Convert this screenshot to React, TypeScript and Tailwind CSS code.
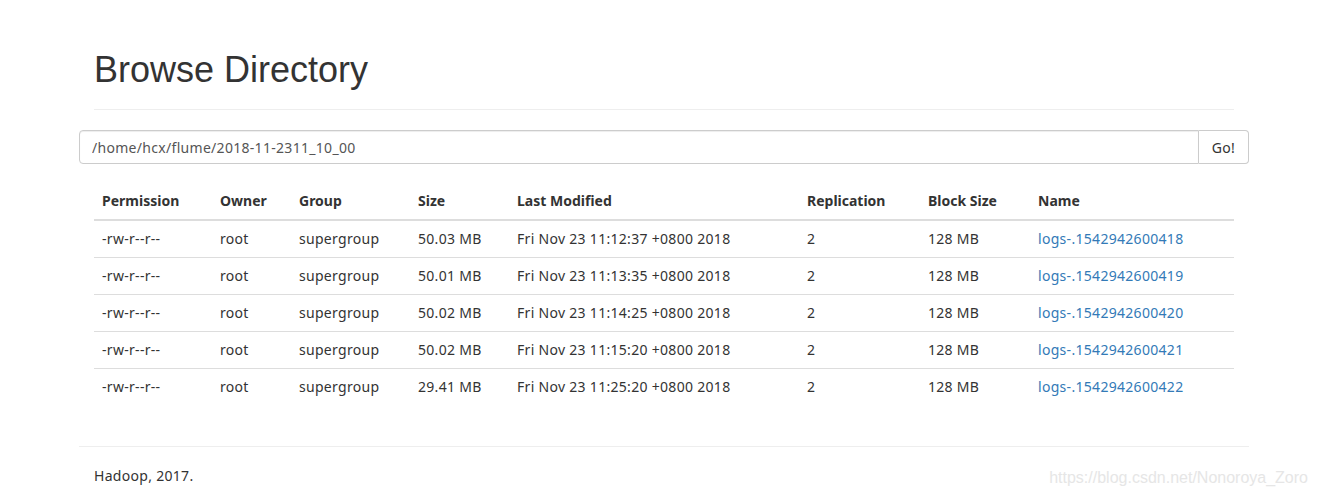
const rows = [
  { size: "50.03 MB", time: "Fri Nov 23 11:12:37 +0800 2018", name: "logs-.1542942600418" },
  { size: "50.01 MB", time: "Fri Nov 23 11:13:35 +0800 2018", name: "logs-.1542942600419" },
  { size: "50.02 MB", time: "Fri Nov 23 11:14:25 +0800 2018", name: "logs-.1542942600420" },
  { size: "50.02 MB", time: "Fri Nov 23 11:15:20 +0800 2018", name: "logs-.1542942600421" },
  { size: "29.41 MB", time: "Fri Nov 23 11:25:20 +0800 2018", name: "logs-.1542942600422" },
];

const cols = [
  { label: "Permission", w: "w-[118px]" },
  { label: "Owner", w: "w-[79px]" },
  { label: "Group", w: "w-[119px]" },
  { label: "Size", w: "w-[99px]" },
  { label: "Last Modified", w: "w-[290px]" },
  { label: "Replication", w: "w-[121px]" },
  { label: "Block Size", w: "w-[110px]" },
  { label: "Name", w: "w-[204px]" },
];

const td = "border-t border-[#ddd] px-2 py-2 leading-5 tracking-[0.3px]";

export default function App() {
  return (
    <div className="relative h-[498px] overflow-hidden bg-white text-[#333] font-['Noto_Sans',sans-serif] text-[14px]">
      <div className="ml-[79px] w-[1170px] px-[15px]">
        <div className="pt-[50px] pb-[19px] border-b border-[#eee]">
          <h1 className="font-['Liberation_Sans',Arial,sans-serif] text-[36px] leading-[40px] text-[#333]">
            Browse Directory
          </h1>
        </div>

        <div className="-mx-[15px] mt-[20px] flex h-[34px]">
          <input
            readOnly
            value="/home/hcx/flume/2018-11-2311_10_00"
            className="flex-1 rounded-l-[4px] border border-[#ccc] px-[12px] text-[14px] tracking-[0.3px] text-[#555] shadow-[inset_0_1px_1px_rgba(0,0,0,0.075)] outline-none"
          />
          <button className="w-[50px] rounded-r-[4px] border border-l-0 border-[#ccc] bg-white text-[14px] tracking-[0.3px] text-[#333]">
            Go!
          </button>
        </div>

        <table className="mt-[19px] w-[1140px] table-fixed border-collapse">
          <thead>
            <tr>
              {cols.map((c) => (
                <th
                  key={c.label}
                  className={`${c.w} border-b-2 border-[#ddd] px-2 py-2 text-left font-bold leading-5`}
                >
                  {c.label}
                </th>
              ))}
            </tr>
          </thead>
          <tbody>
            {rows.map((r) => (
              <tr key={r.name}>
                <td className={td}>-rw-r--r--</td>
                <td className={td}>root</td>
                <td className={td}>supergroup</td>
                <td className={td}>{r.size}</td>
                <td className={td}>{r.time}</td>
                <td className={td}>2</td>
                <td className={td}>128 MB</td>
                <td className={td}>
                  <a href="#" className="text-[#337ab7]">
                    {r.name}
                  </a>
                </td>
              </tr>
            ))}
          </tbody>
        </table>

        <div className="-mx-[15px] mt-[41px] border-t border-[#eee]" />
        <p className="mt-[19px] leading-5 tracking-[0.3px]">Hadoop, 2017.</p>
      </div>

      <div className="absolute bottom-[10px] right-[10px] font-['Liberation_Sans',Arial,sans-serif] text-[16px] leading-5 text-[#e6e6e6]">
        https://blog.csdn.net/Nonoroya_Zoro
      </div>
    </div>
  );
}
